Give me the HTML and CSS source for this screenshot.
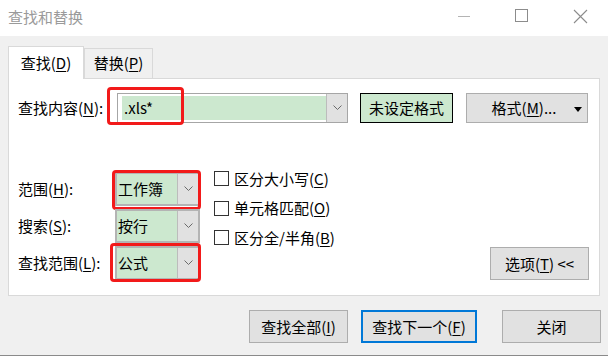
FILE: index.html
```html
<!DOCTYPE html>
<html lang="zh-CN">
<head>
  <meta charset="UTF-8">
  <title>查找和替换</title>
  <link rel="stylesheet" href="styles.css">
</head>
<body>
  <div class="window">
    <div class="titlebar">
      <div class="title">查找和替换</div>
      <div class="controls">
        <svg class="ctl min" width="14" height="14" viewBox="0 0 14 14"><line x1="1" y1="7.5" x2="13" y2="7.5" stroke="#b4b4b4" stroke-width="1"/></svg>
        <svg class="ctl max" width="14" height="14" viewBox="0 0 14 14"><rect x="0.5" y="0.5" width="12" height="12" fill="none" stroke="#8c8c8c" stroke-width="1"/></svg>
        <svg class="ctl close" width="15" height="15" viewBox="0 0 15 15"><path d="M1 1 L14 14 M14 1 L1 14" stroke="#8c8c8c" stroke-width="1.1"/></svg>
      </div>
    </div>

    <div class="tabs">
      <div class="tab active">查找(<u>D</u>)</div>
      <div class="tab">替换(<u>P</u>)</div>
    </div>

    <div class="panel">
      <div class="find-row">
        <label class="find-label">查找内容(<u>N</u>):</label>
        <div class="combo wide">
          <div class="combo-text">.xls*</div>
          <div class="combo-btn">
            <svg width="9" height="6" viewBox="0 0 9 6"><polyline points="0.5,0.5 4.5,4.5 8.5,0.5" fill="none" stroke="#6a6a6a" stroke-width="1"/></svg>
          </div>
          <span class="mark mark-find"></span>
        </div>
        <button class="btn preview">未设定格式</button>
        <button class="btn format">格式(<u>M</u>)...<svg class="caret" width="8" height="5" viewBox="0 0 8 5"><polygon points="0,0 8,0 4,5" fill="#000"/></svg></button>
      </div>

      <div class="options">
        <div class="opt-col">
          <div class="opt-row">
            <label class="opt-label">范围(<u>H</u>):</label>
            <div class="combo small">
              <div class="combo-text">工作簿</div>
              <div class="combo-btn"><svg width="9" height="6" viewBox="0 0 9 6"><polyline points="0.5,0.5 4.5,4.5 8.5,0.5" fill="none" stroke="#6a6a6a" stroke-width="1"/></svg></div>
              <span class="mark mark-scope"></span>
            </div>
          </div>
          <div class="opt-row">
            <label class="opt-label">搜索(<u>S</u>):</label>
            <div class="combo small">
              <div class="combo-text">按行</div>
              <div class="combo-btn"><svg width="9" height="6" viewBox="0 0 9 6"><polyline points="0.5,0.5 4.5,4.5 8.5,0.5" fill="none" stroke="#6a6a6a" stroke-width="1"/></svg></div>
            </div>
          </div>
          <div class="opt-row">
            <label class="opt-label">查找范围(<u>L</u>):</label>
            <div class="combo small">
              <div class="combo-text">公式</div>
              <div class="combo-btn"><svg width="9" height="6" viewBox="0 0 9 6"><polyline points="0.5,0.5 4.5,4.5 8.5,0.5" fill="none" stroke="#6a6a6a" stroke-width="1"/></svg></div>
              <span class="mark mark-look"></span>
            </div>
          </div>
        </div>

        <div class="check-col">
          <div class="check"><span class="box"></span>区分大小写(<u>C</u>)</div>
          <div class="check"><span class="box"></span>单元格匹配(<u>O</u>)</div>
          <div class="check"><span class="box"></span>区分全/半角(<u>B</u>)</div>
        </div>

        <button class="btn more">选项(<u>T</u>) &lt;&lt;</button>
      </div>
    </div>

    <div class="footer">
      <button class="btn act">查找全部(<u>I</u>)</button>
      <button class="btn act next">查找下一个(<u>F</u>)</button>
      <button class="btn act close-btn">关闭</button>
    </div>
  </div>
</body>
</html>
```

FILE: styles.css
```css
* {
  box-sizing: border-box;
}
body {
  margin: 0;
  font-family: "Noto Sans CJK SC", "Noto Sans", sans-serif;
  font-size: 15px;
  color: #000;
  background: #f0f0f0;
}
u {
  text-underline-offset: 2px;
}
.window {
  width: 608px;
  height: 356px;
  background: #f0f0f0;
  border-bottom: 1px solid #8a8a8a;
}
.titlebar {
  height: 36px;
  background: #fff;
  display: flex;
  align-items: center;
  justify-content: space-between;
}
.title {
  padding-left: 8px;
  color: #9a9a9a;
  line-height: 20px;
  margin-top: -2px;
}
.controls {
  display: flex;
  align-items: center;
  margin-top: -4px;
}
.ctl.min {
  margin-right: 44px;
}
.ctl.max {
  margin-right: 44px;
}
.ctl.close {
  margin-right: 20px;
}
.tabs {
  display: flex;
  align-items: flex-end;
  padding: 10px 0 0 8px;
  height: 42px;
}
.tab {
  height: 30px;
  border: 1px solid #d9d9d9;
  border-bottom: none;
  background: #f0f0f0;
  line-height: 28px;
  padding: 0;
  width: 69px;
  text-align: center;
  white-space: nowrap;
}
.tab.active {
  height: 33px;
  width: 76px;
  background: #fff;
  margin-bottom: -1px;
  position: relative;
  line-height: 32px;
}
.panel {
  margin: 0 8px;
  height: 218px;
  background: #fff;
  border: 1px solid #d9d9d9;
  padding: 13px 10px 0 9px;
}
.find-row {
  display: flex;
  align-items: center;
  height: 31px;
}
.find-label {
  width: 99px;
  line-height: 20px;
  white-space: nowrap;
}
.combo {
  position: relative;
  display: flex;
  flex-shrink: 0;
  height: 30px;
  border: 1px solid #a6a6a6;
  background: #fff;
}
.combo.wide {
  width: 231px;
  padding: 2px 0 2px 4px;
}
.combo-text {
  flex: 1;
  background: #cce8cf;
  line-height: 24px;
  padding-left: 2px;
  white-space: nowrap;
}
.combo.small .combo-text {
  padding-left: 1px;
}
.combo-btn {
  width: 21px;
  background: #e1e1e1;
  border-left: 1px solid #bcbcbc;
  display: flex;
  align-items: center;
  justify-content: center;
}
.combo.wide .combo-btn {
  margin: -2px 0;
}
.combo.small {
  width: 85px;
  height: 34px;
  border-width: 2px;
  border-color: #b4b4b4;
}
.combo.small .combo-text {
  line-height: 30px;
}
.mark {
  position: absolute;
  border: 3px solid #f21a1a;
  border-radius: 4px;
  pointer-events: none;
}
.mark-find {
  left: -11px;
  top: -7px;
  width: 77px;
  height: 38px;
}
.mark-scope {
  left: -5px;
  top: -4px;
  width: 89px;
  height: 40px;
}
.mark-look {
  left: -7px;
  top: -5px;
  width: 91px;
  height: 39px;
}
.btn {
  font-family: inherit;
  font-size: 15px;
  color: #000;
  background: #e1e1e1;
  border: 1px solid #adadad;
  border-radius: 0;
  padding: 0;
  line-height: 20px;
  white-space: nowrap;
}
.preview {
  margin-left: 12px;
  width: 93px;
  height: 30px;
  background: #cce8cf;
  border-color: #000;
}
.format {
  margin-left: 13px;
  width: 122px;
  height: 30px;
  position: relative;
  padding-right: 6px;
}
.caret {
  position: absolute;
  right: 5px;
  top: 13px;
}
.options {
  display: flex;
  margin-top: 47px;
}
.opt-col {
  display: flex;
  flex-direction: column;
}
.opt-row {
  display: flex;
  align-items: center;
  height: 37px;
}
.opt-label {
  width: 97px;
  line-height: 20px;
  white-space: nowrap;
}
.check-col {
  margin-left: 14px;
  display: flex;
  flex-direction: column;
  margin-top: -6px;
}
.check {
  display: flex;
  align-items: center;
  height: 29.5px;
  line-height: 20px;
  white-space: nowrap;
}
.box {
  flex-shrink: 0;
  width: 15px;
  height: 15px;
  border: 1px solid #333;
  margin-right: 5px;
  background: #fff;
}
.more {
  margin-left: auto;
  align-self: flex-end;
  width: 99px;
  height: 33px;
  margin-bottom: 1px;
}
.footer {
  display: flex;
  padding: 14px 7px 0 0;
  justify-content: flex-end;
}
.act {
  width: 99px;
  height: 33px;
}
.next {
  width: 116px;
  margin-left: 13px;
  border: 2px solid #0078d7;
}
.close-btn {
  margin-left: 25px;
}
```
